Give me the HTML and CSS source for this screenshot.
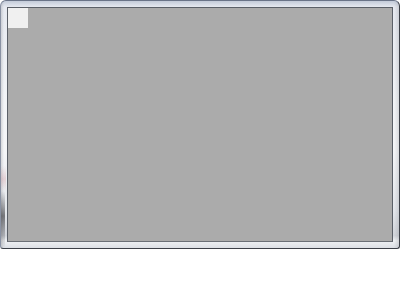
FILE: index.html
```html
<!DOCTYPE html>
<html>
<head>
<meta charset="utf-8">
<link rel="stylesheet" href="styles.css">
</head>
<body>
<div class="window">
  <div class="client">
    <div class="square"></div>
  </div>
</div>
</body>
</html>
```
FILE: styles.css
```css
html, body {
  margin: 0;
  padding: 0;
  background: #ffffff;
}
.window {
  box-sizing: border-box;
  width: 400px;
  height: 249px;
  display: flex;
  padding: 6px;
  border: 1px solid #3c4048;
  border-top-color: #6a7488;
  border-left-color: #8a92a4;
  border-radius: 6px 6px 3px 3px;
  background:
    linear-gradient(180deg, rgba(0,0,0,0) 0px, rgba(0,0,0,0) 190px, rgba(30,30,34,0.55) 215px, rgba(30,30,34,0.15) 238px, rgba(0,0,0,0) 247px) 0 0 / 4px 100% no-repeat,
    linear-gradient(180deg, rgba(0,0,0,0) 0px, rgba(0,0,0,0) 165px, rgba(200,120,130,0.25) 178px, rgba(0,0,0,0) 190px) 0 0 / 5px 100% no-repeat,
    linear-gradient(90deg, rgba(40,44,52,0.15) 0px, rgba(255,255,255,0) 3px, rgba(255,255,255,0) 393px, rgba(60,64,72,0.15) 398px),
    linear-gradient(180deg, #c3cbd9 0px, #e6e9f0 6px, #f2f4f7 40%, #f5f6f8 60%, #e4e7ec 85%, #d2d5db 95%, #eff1f4 97%, #dcdfe5 100%);
}
.client {
  flex: 1;
  background: #ababab;
  border: 1px solid #5b6068;
  border-bottom-color: #6b6f76;
}
.square {
  width: 20px;
  height: 20px;
  background: #f0f0f0;
}
```
